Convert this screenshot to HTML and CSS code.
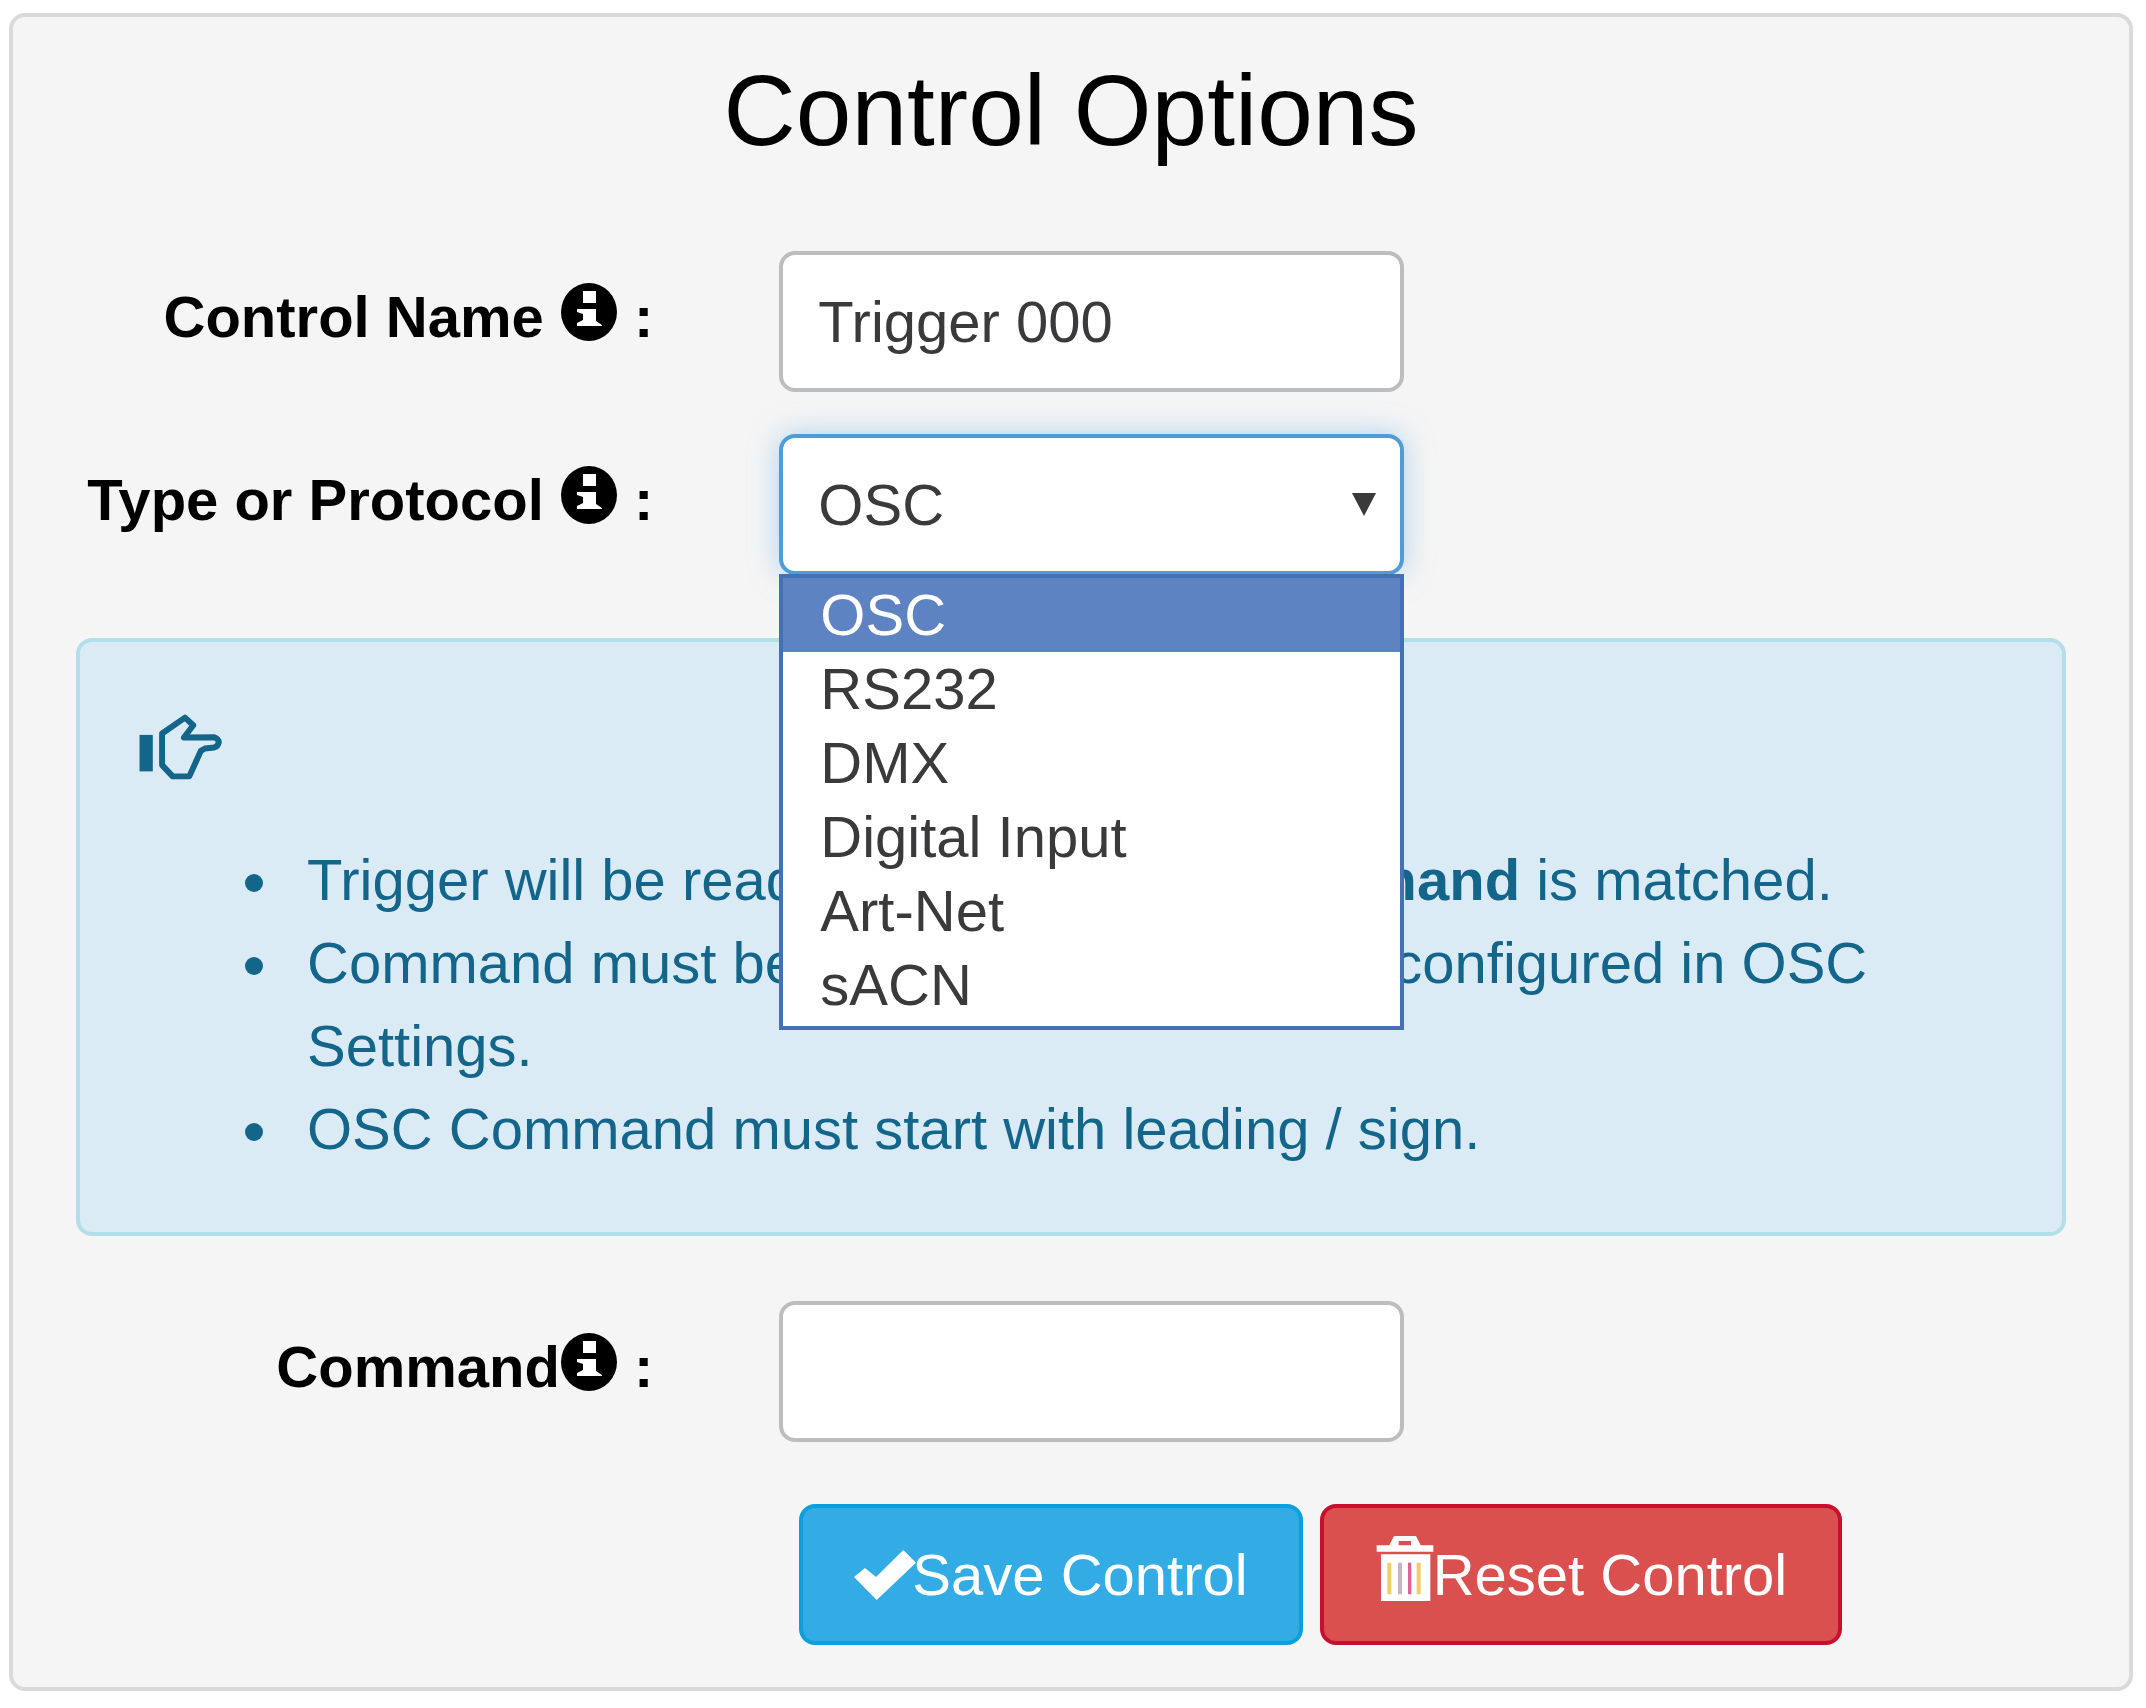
FILE: index.html
```html
<!DOCTYPE html>
<html lang="en">
<head>
    <meta charset="utf-8">
    <title>Control Options</title>
    <link rel="stylesheet" href="styles.css">
</head>
<body>
<svg class="defs" aria-hidden="true">
    <symbol id="info" viewBox="0 0 56 58">
        <ellipse cx="28" cy="29" rx="28" ry="29"/>
        <path fill="#fff" d="M22 8h13v12H22zM16 26h19v12l6 4v1H16v-3l6-3v-6l-6-2z"/>
    </symbol>
</svg>
<form class="well">
    <h3>Control Options</h3>
    <div class="form-group">
        <label for="name">Control Name <svg class="info"><use href="#info"/></svg> :</label>
        <input class="form-control" id="name" type="text" value="Trigger 000">
    </div>
    <div class="form-group">
        <label for="type">Type or Protocol <svg class="info"><use href="#info"/></svg> :</label>
        <div class="select">
            <select class="form-control active" id="type">
                <option>OSC</option>
                <option>RS232</option>
                <option>DMX</option>
                <option>Digital Input</option>
                <option>Art-Net</option>
                <option>sACN</option>
            </select>
            <svg class="arrow" viewBox="0 0 24 23"><path d="M0 0h24L12 23z"/></svg>
            <ul class="menu">
                <li class="selected">OSC</li>
                <li>RS232</li>
                <li>DMX</li>
                <li>Digital Input</li>
                <li>Art-Net</li>
                <li>sACN</li>
            </ul>
        </div>
    </div>
    <div class="alert">
        <div class="alert-icon">
            <svg class="hand" viewBox="54 64 252 208">
                <path class="cuff" d="M58 130h40v110H58z"/>
                <path d="M126 126l69-48 25 23-28 37 91-1q13 5 14 15-2 12-14 16l-28 3-12 7-35 77h-50l-32-34z"/>
            </svg>
        </div>
        <ul>
            <li>Trigger will be ready when the OSC <b>Command</b> is matched.</li>
            <li>Command must be received from the port configured in OSC Settings.</li>
            <li>OSC Command must start with leading / sign.</li>
        </ul>
    </div>
    <div class="form-group">
        <label for="command">Command<svg class="info"><use href="#info"/></svg> :</label>
        <input class="form-control" id="command" type="text">
    </div>
    <div class="form-group">
        <div class="buttons">
            <button class="btn btn-save" type="button"><svg class="check" viewBox="42 24 174 150"><path d="M42 105l33-27 33 27 82-81 38 38-118 112z"/></svg>Save Control</button>
            <button class="btn btn-reset" type="reset"><svg class="trash" viewBox="47 105 174 234">
                <path fill-rule="evenodd" d="M52 133h38l14-28h66l14 28h38v19H52zM118 120v13h37v-13z"/>
                <path d="M65 160h148v140H65z"/>
                <path class="slit" d="M84 185h12v95H84zM172 185h12v95h-12z"/>
                <path class="slit-gray" d="M116 185h12v95h-12z"/>
                <path class="slit-pink" d="M146 185h10v95h-10z"/>
            </svg>Reset Control</button>
        </div>
    </div>
</form>
</body>
</html>
```

FILE: styles.css
```css
*{box-sizing:border-box;}
body{margin:13px 13px 0 9px;background:#fff;font:58px/83px "Liberation Sans",Arial,sans-serif;color:#000;}
ul{margin:0;padding:0;}
.defs{position:absolute;width:0;height:0;}

.well{padding:38px 63px 42px;background:#f5f5f5;border:4px solid #d9dadc;border-radius:16px;}
.well h3{margin:0 0 86px;font-size:100px;line-height:110px;font-weight:400;text-align:center;}

.form-group{display:grid;grid-template-columns:577fr 624fr 536fr;column-gap:126px;margin-bottom:42px;}
.form-group:last-child{margin-bottom:0;}
.form-group label{font-weight:700;line-height:132px;height:141px;text-align:right;white-space:nowrap;}
.info{width:56px;height:58px;vertical-align:-4px;margin:0 1px;}

.form-control{display:block;width:100%;height:141px;padding:0 35px;background:#fff;border:4px solid #bcbdbf;border-radius:16px;font:inherit;color:#3a3a3c;appearance:none;outline:none;}
.form-control.active{border-color:#4f9dd8;box-shadow:0 0 28px rgba(102,175,233,.5);}
.select{position:relative;}
.arrow{position:absolute;top:59px;right:28px;width:24px;height:23px;fill:#3a3a3c;pointer-events:none;}
.menu{position:absolute;top:140px;left:0;right:0;z-index:1;padding-bottom:4px;background:#fff;border:4px solid #4470b5;list-style:none;color:#3a3a3c;}
.menu li{padding-left:37px;line-height:74px;}
.menu .selected{background:#5d83c2;color:#fff;}

.alert{margin:63px 0 65px;padding:62px 58px;background:#daebf6;border:4px solid #b3dfea;border-radius:16px;color:#14658a;}
.alert ul{padding-left:149px;}
.alert li{padding-left:20px;}
.alert-icon{display:flex;align-items:center;height:86px;margin-bottom:48px;}
.hand{width:84px;height:69px;fill:none;stroke:#14658a;stroke-width:18;stroke-linejoin:round;overflow:visible;}
.hand .cuff{fill:#14658a;stroke:none;}

.alert + .form-group{margin-bottom:62px;}
.buttons{grid-column:2 / 4;display:flex;gap:17px;padding-left:20px;}
.btn{display:flex;align-items:center;height:141px;padding:0 51px;border:4px solid;border-radius:16px;font:inherit;color:#fff;white-space:nowrap;}
.btn-save{background:#33abe4;border-color:#0aa0de;}
.btn-reset{background:#d9504e;border-color:#c8102e;}
.btn svg{width:58px;fill:#fff;overflow:visible;}
.btn .check{height:50px;}
.btn .trash{height:78px;}
.trash .slit{fill:#efcb6a;}
.trash .slit-gray{fill:#c9b3c4;}
.trash .slit-pink{fill:#e0609a;}
```
